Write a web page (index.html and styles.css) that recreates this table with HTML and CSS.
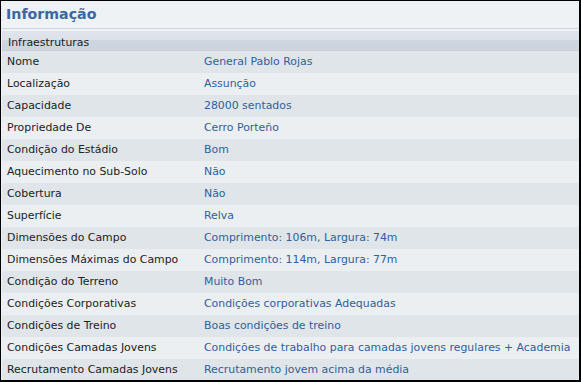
FILE: index.html
```html
<!DOCTYPE html>
<html>
<head>
<meta charset="utf-8">
<link rel="stylesheet" href="styles.css">
</head>
<body>
<div class="panel">
  <h1 class="title">Informação</h1>
  <div class="table">
    <div class="head">Infraestruturas</div>
    <div class="row dark"><span class="lbl">Nome</span><span class="val">General Pablo Rojas</span></div>
    <div class="row light"><span class="lbl">Localização</span><span class="val">Assunção</span></div>
    <div class="row dark"><span class="lbl">Capacidade</span><span class="val">28000 sentados</span></div>
    <div class="row light"><span class="lbl">Propriedade De</span><span class="val">Cerro Porteño</span></div>
    <div class="row dark"><span class="lbl">Condição do Estádio</span><span class="val">Bom</span></div>
    <div class="row light"><span class="lbl">Aquecimento no Sub-Solo</span><span class="val">Não</span></div>
    <div class="row dark"><span class="lbl">Cobertura</span><span class="val">Não</span></div>
    <div class="row light"><span class="lbl">Superfície</span><span class="val">Relva</span></div>
    <div class="row dark"><span class="lbl">Dimensões do Campo</span><span class="val">Comprimento: 106m, Largura: 74m</span></div>
    <div class="row light"><span class="lbl">Dimensões Máximas do Campo</span><span class="val">Comprimento: 114m, Largura: 77m</span></div>
    <div class="row dark"><span class="lbl">Condição do Terreno</span><span class="val">Muito Bom</span></div>
    <div class="row light"><span class="lbl">Condições Corporativas</span><span class="val">Condições corporativas Adequadas</span></div>
    <div class="row dark"><span class="lbl">Condições de Treino</span><span class="val">Boas condições de treino</span></div>
    <div class="row light"><span class="lbl">Condições Camadas Jovens</span><span class="val">Condições de trabalho para camadas jovens regulares + Academia</span></div>
    <div class="row dark"><span class="lbl">Recrutamento Camadas Jovens</span><span class="val">Recrutamento jovem acima da média</span></div>
  </div>
</div>
</body>
</html>
```

FILE: styles.css
```css
html, body {
  margin: 0;
  padding: 0;
  background: #eef2f5;
}
.panel {
  width: 581px;
  height: 382px;
  box-sizing: border-box;
  border-style: solid;
  border-color: #000;
  border-width: 1px 2px 2px 1px;
  background: #eef2f5;
  font-family: "DejaVu Sans", sans-serif;
  overflow: hidden;
}
.title {
  margin: 0;
  height: 28px;
  padding: 4px 0 0 5px;
  box-sizing: border-box;
  font-size: 14.2px;
  font-weight: bold;
  color: #3b67a4;
  line-height: 18px;
  border-bottom: 1px solid #cfd4d8;
}
.table {
  margin-top: 2px;
  margin-left: 1px;
}
.head {
  height: 16px;
  padding-top: 3px;
  line-height: 18px;
  padding-left: 6px;
  font-size: 10.9px;
  color: #222;
  background: linear-gradient(#dfe3ec 0%, #dde1ea 50%, #cfd6e0 50%, #cdd4de 100%);
  border-bottom: 1px solid #c9d0d7;
}
.row {
  display: flex;
  height: 22px;
  box-sizing: border-box;
  padding-bottom: 1px;
  align-items: center;
  font-size: 10.9px;
}
.row.dark { background: #dfe5e8; }
.row.light { background: #ebeff2; }
.lbl {
  width: 197px;
  padding-left: 5px;
  color: #222;
}
.val {
  color: #30609f;
}
```
